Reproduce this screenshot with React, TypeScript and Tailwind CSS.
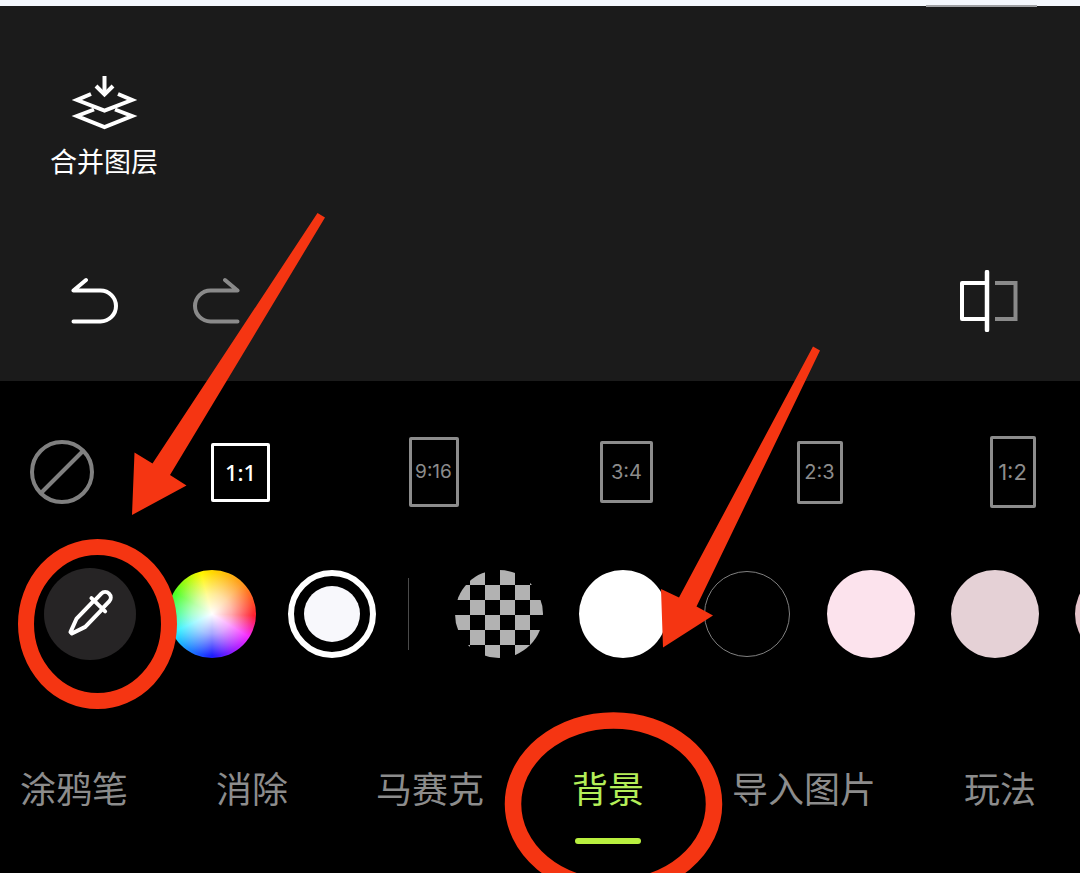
import { useState } from "react";
import clsx from "clsx";

const ratios = [
  { label: "1:1", box: "w-[59px] h-[59px] text-[22px] font-medium font-['Noto_Sans',sans-serif]" },
  { label: "9:16", box: "w-[50px] h-[70px] text-[19px]" },
  { label: "3:4", box: "w-[53px] h-[62px] text-[20px]" },
  { label: "2:3", box: "w-[46px] h-[63px] text-[20px]" },
  { label: "1:2", box: "w-[46px] h-[72px] text-[22px]" },
];

const swatches = [
  { name: "透明", style: "size-[88px] bg-[conic-gradient(#b2b2b2_25%,#000_0_50%,#b2b2b2_0_75%,#000_0)] bg-[length:30px_30px]" },
  { name: "白色", style: "size-[88px] bg-white" },
  { name: "黑色", style: "size-[86px] mx-px bg-black border border-[#808080]" },
  { name: "浅粉", style: "size-[88px] bg-[#fce3ed]" },
  { name: "灰粉", style: "size-[88px] bg-[#e5d1d6]" },
  { name: "藕粉", style: "size-[88px] bg-[#e6c3ca]" },
];

const tabs = ["涂鸦笔", "消除", "马赛克", "背景", "导入图片", "玩法"];

function MergeIcon() {
  return (
    <svg width="67" height="56" viewBox="0 0 67 56" fill="none" stroke="currentColor" strokeWidth="4">
      <path d="M33.5 1V20" />
      <path d="M25 11L33.5 19.5L42 11" />
      <path d="M20 19L6 25L33.5 35.5L61 25L47 19" />
      <path d="M23 34.5L6 41L33.5 52L61 41L44 34.5" />
    </svg>
  );
}

function UndoIcon() {
  return (
    <svg width="48" height="48" viewBox="0 0 48 48" fill="none" stroke="currentColor" strokeWidth="4" strokeLinecap="round" strokeLinejoin="round">
      <path d="M15 3L2.5 13.5H29.5A15.5 15.5 0 0 1 29.5 44.5H2.5" />
    </svg>
  );
}

function RedoIcon() {
  return (
    <svg width="48" height="48" viewBox="0 0 48 48" fill="none" stroke="currentColor" strokeWidth="4" strokeLinecap="round" strokeLinejoin="round">
      <path d="M33 3L45.5 13.5H18.5A15.5 15.5 0 0 0 18.5 44.5H45.5" />
    </svg>
  );
}

function CompareIcon() {
  return (
    <svg width="62" height="62" viewBox="0 0 62 62" fill="none" strokeWidth="4">
      <path d="M38 13H58.5V49H38" stroke="#8a8a8a" />
      <path d="M30 13H5V49H30" stroke="#fff" strokeLinejoin="round" />
      <path d="M30 2V60" stroke="#fff" strokeWidth="4.5" strokeLinecap="round" />
    </svg>
  );
}

function NoneIcon() {
  return (
    <svg width="64" height="64" viewBox="0 0 64 64" fill="none" stroke="currentColor" strokeWidth="4">
      <circle cx="32" cy="32" r="30" />
      <path d="M11 53L53 11" />
    </svg>
  );
}

function DropperIcon() {
  return (
    <svg width="92" height="92" viewBox="0 0 92 92" fill="none" stroke="#fff" strokeWidth="4" strokeLinecap="round" strokeLinejoin="round">
      <g transform="translate(26.5 65.5) rotate(44)">
        <path d="M-6 -40V-15L-1 -1H1L6 -15V-40" />
        <path d="M-9.5 -40H9.5" />
        <path d="M-5.5 -40V-50A5.5 5.5 0 0 1 5.5 -50V-40" />
      </g>
    </svg>
  );
}

// Red arrows and rings of the tutorial, drawn over the editor
function Annotations() {
  return (
    <svg className="absolute left-0 top-0 pointer-events-none" width="1080" height="873" viewBox="0 0 1080 873" aria-hidden="true">
      <g fill="#f53512">
        <path d="M317.5 213L325 217.5L170 475L186.5 485.5L132 515L134.5 452.5L152.5 463.5Z" />
        <path d="M813 346.5L820 350.5L696.5 606.5L713 615.5L663 647.5L661 589L679 597.5Z" />
      </g>
      <g fill="none" stroke="#f53512">
        <ellipse cx="97.5" cy="624" rx="71.5" ry="77" strokeWidth="16" />
        <ellipse cx="613.5" cy="804" rx="100.5" ry="83.5" strokeWidth="16.5" />
      </g>
    </svg>
  );
}

export default function App() {
  const [ratio, setRatio] = useState("1:1");
  const [activeTab, setActiveTab] = useState("背景");

  return (
    <div className="relative min-h-screen overflow-hidden bg-black font-['Noto_Sans_CJK_SC',sans-serif]">
      <div className="relative h-1.5 bg-[#f5f8fd]">
        <div className="absolute right-[43px] -bottom-px h-0.5 w-[111px] bg-[#a0a1a4]" />
      </div>

      {/* Canvas area */}
      <header className="bg-[#1b1b1b] pt-[69px] pb-[49px]">
        <button className="ml-[50px] flex flex-col items-center gap-2 text-white">
          <MergeIcon />
          <span className="text-[27px] leading-11">合并图层</span>
        </button>
        <div className="mt-[87px] flex items-center pl-[71px] pr-[61px]">
          <button aria-label="撤销" className="text-white">
            <UndoIcon />
          </button>
          <button aria-label="重做" className="ml-[73px] text-[#8a8a8a]">
            <RedoIcon />
          </button>
          <button aria-label="对比" className="ml-auto">
            <CompareIcon />
          </button>
        </div>
      </header>

      {/* Ratios */}
      <div className="mt-[55px] flex h-[72px] items-center overflow-hidden font-[Inter,sans-serif]">
        <div className="w-36 shrink-0 pl-[30px]">
          <button aria-label="无" className="block text-[#808080]">
            <NoneIcon />
          </button>
        </div>
        {ratios.map(({ label, box }) => (
          <div key={label} className="flex w-[193px] shrink-0 justify-center">
            <button
              onClick={() => setRatio(label)}
              className={clsx(
                "flex items-center justify-center rounded-xs border-[3px] whitespace-nowrap",
                box,
                label === ratio ? "border-white text-white" : "border-[#8c8c8c] text-[#8c8c8c]"
              )}
            >
              {label}
            </button>
          </div>
        ))}
      </div>

      {/* Colours */}
      <div className="mt-[60px] flex h-[92px] items-center gap-8 overflow-hidden pl-11">
        <button aria-label="取色" className="size-[92px] shrink-0 rounded-full bg-[#262425]">
          <DropperIcon />
        </button>
        <button
          aria-label="调色盘"
          className="size-[88px] shrink-0 rounded-full bg-[radial-gradient(circle_closest-side,#fff_0%,#fff9_45%,#fff0_95%),conic-gradient(#ffd800_0deg,#ff9a20_45deg,#ff2030_92deg,#f52cff_122deg,#a020ff_148deg,#1a1cff_180deg,#2090ff_215deg,#20f0ff_245deg,#30ff80_272deg,#50ff20_300deg,#fff600_345deg,#ffd800_360deg)]"
        />
        <button aria-label="当前颜色" className="flex size-[88px] shrink-0 items-center justify-center rounded-full border-[6px] border-white">
          <span className="size-14 rounded-full bg-[#f8f8fc]" />
        </button>
        <div className="h-[72px] w-px shrink-0 bg-[#4a4a4a]" />
        <div className="ml-3.5 flex shrink-0 items-center gap-9">
          {swatches.map((swatch) => (
            <button key={swatch.name} aria-label={swatch.name} className={clsx("shrink-0 rounded-full", swatch.style)} />
          ))}
        </div>
      </div>

      {/* Tools */}
      <nav className="mt-[100px] flex items-start gap-[88px] pl-5 text-[36px] leading-[54px]">
        {tabs.map((tab) => (
          <button
            key={tab}
            onClick={() => setActiveTab(tab)}
            className={clsx(
              "flex shrink-0 flex-col items-center whitespace-nowrap",
              tab === activeTab ? "text-[#b4ee58]" : "text-[#8c8c8c]"
            )}
          >
            {tab}
            {tab === activeTab && <span className="mt-6 h-1.5 w-[66px] rounded-full bg-[#b9ef3f]" />}
          </button>
        ))}
      </nav>

      <Annotations />
    </div>
  );
}
